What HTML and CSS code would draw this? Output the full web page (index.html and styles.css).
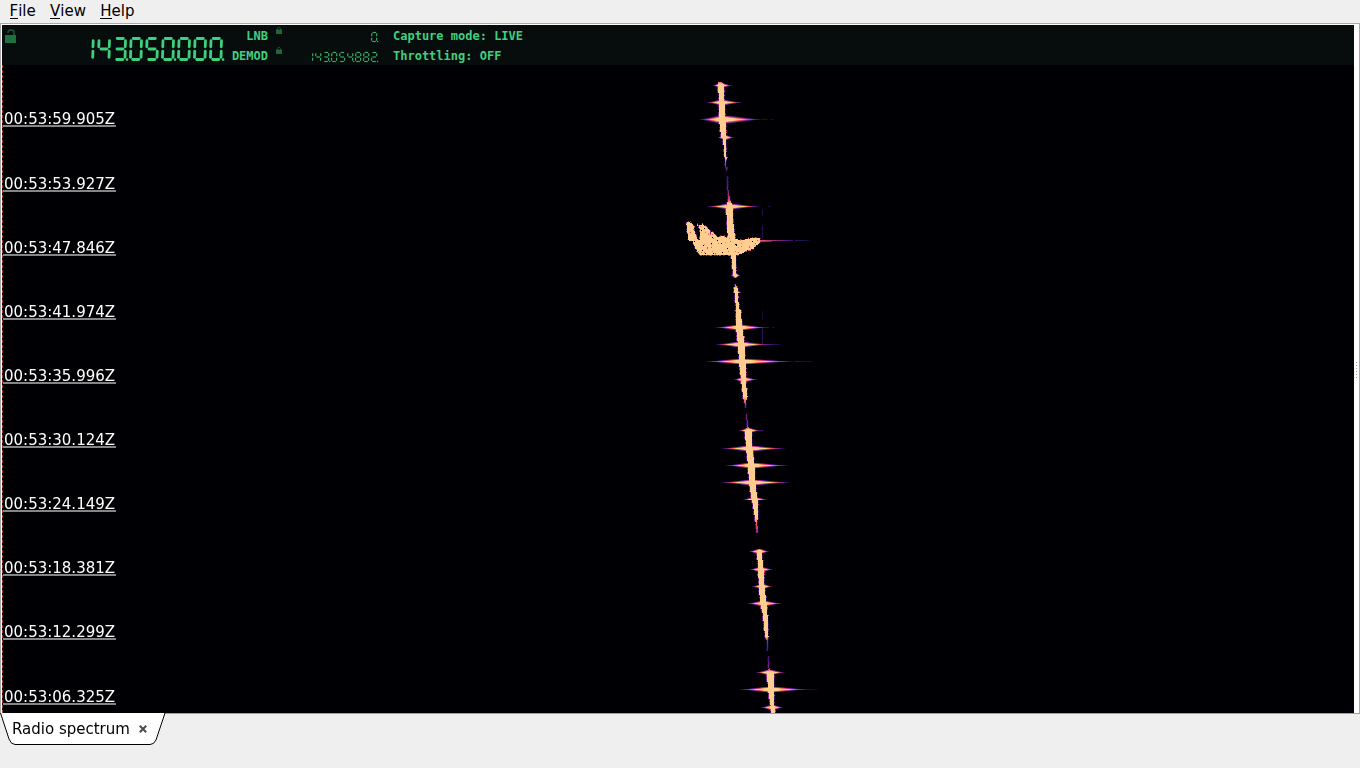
FILE: index.html
```html
<!DOCTYPE html>
<html lang="en">
<head>
<meta charset="utf-8">
<title>Radio spectrum</title>
<link rel="stylesheet" href="styles.css">
</head>
<body>
<nav class="menubar"><span><u>F</u>ile</span><span><u>V</u>iew</span><span><u>H</u>elp</span></nav>
<main class="frame">
  <section class="view">
    <header class="status">
      <svg class="lock-open" viewBox="0 0 12 14"><path d="M3 4V3q0-2 3-2t3 2v4" fill="none" stroke="#1c6138" stroke-width="1.4"/><path d="M0 6h11v8H0z" fill="#206f40"/></svg>
      <svg class="lcd lcd-main" data-value="143.050.000." role="img" aria-label="143.050.000"></svg>
      <div class="labels"><span>LNB</span><span>DEMOD</span></div>
      <div class="locks">
        <svg viewBox="0 0 6 7"><path d="M1.5 3V1.5q0-1 1.5-1t1.5 1V3" fill="none" stroke="#1a4c30"/><path d="M0 2.5h6V7H0z" fill="#20653c"/></svg>
        <svg viewBox="0 0 6 7"><path d="M1.5 3V1.5q0-1 1.5-1t1.5 1V3" fill="none" stroke="#1a4c30"/><path d="M0 2.5h6V7H0z" fill="#20653c"/></svg>
      </div>
      <div class="readouts">
        <svg class="lcd lcd-small" data-value="0." role="img" aria-label="0"></svg>
        <svg class="lcd lcd-small" data-value="143.054.882." role="img" aria-label="143.054.882"></svg>
      </div>
      <div class="modes"><span>Capture mode: LIVE</span><span>Throttling: OFF</span></div>
    </header>
    <div class="waterfall">
      <canvas class="plot" width="1352" height="648"></canvas>
      <ol class="times">
        <li>00:53:59.905Z</li><li>00:53:53.927Z</li><li>00:53:47.846Z</li><li>00:53:41.974Z</li><li>00:53:35.996Z</li><li>00:53:30.124Z</li><li>00:53:24.149Z</li><li>00:53:18.381Z</li><li>00:53:12.299Z</li><li>00:53:06.325Z</li>
      </ol>
    </div>
  </section>
  <div class="splitter"><i></i><i></i><i></i><i></i><i></i><i></i></div>
</main>
<footer class="tabs">
  <div class="tab">
    <svg class="tab-shape" viewBox="0 0 166 32"><path d="M.5 0L9 26Q11 31.5 15 31.500H150Q154 31.500 156 27L165 0" fill="#fff" stroke="#000"/></svg>
    <span class="tab-name">Radio spectrum</span>
    <svg class="close" viewBox="0 0 8 8"><path d="M.8.8l6.400 6.400M7.200.8L.8 7.200" stroke="#4b4b4b" stroke-width="2"/></svg>
  </div>
</footer>
<script src="app.js"></script>
</body>
</html>
```
FILE: styles.css
```css
* { box-sizing: border-box; }
body { margin: 0; width: 1360px; height: 768px; overflow: hidden; display: flex; flex-direction: column; background: #efefef; color: #000; font-family: "DejaVu Sans", sans-serif; font-size: 15px; }
svg { display: block; }
.menubar { height: 23px; padding: 2px 0 0 9.5px; display: flex; gap: 14.3px; line-height: 18px; }
.menubar u { text-decoration: none; box-shadow: inset 0 -1px #000; display: inline-block; height: 17px; }
.frame { height: 691px; display: flex; background: #fff; border-top: 1px solid #a8a8a8; border-left: 1px solid #a8a8a8; border-right: 1px solid #a8a8a8; border-bottom: 1px solid #a0a0a0; padding: 1px 0 0 1px; }
.view { width: 1352px; height: 688px; background: #000004; }
.status { height: 40px; background: #070d0d; display: flex; color: #3fd07e; font: bold 12px/20px "DejaVu Sans Mono", monospace; }
.lock-open { width: 12px; height: 14px; margin: 4px 0 0 3px; }
.lcd-main { width: 140px; height: 40px; margin-left: 69px; color: #3fd07e; }
.labels { width: 42px; padding-top: 1px; display: flex; flex-direction: column; text-align: right; }
.locks { width: 6px; margin: 2px 0 0 8px; display: flex; flex-direction: column; gap: 13px; }
.locks svg { width: 6px; height: 7px; }
.readouts { width: 72px; margin-left: 26px; display: flex; flex-direction: column; align-items: flex-end; color: #35ad69; }
.lcd-small { width: 72px; height: 20px; }
.modes { margin-left: 13px; padding-top: 1px; display: flex; flex-direction: column; white-space: pre; }
.waterfall { display: grid; height: 648px; }
.waterfall > * { grid-area: 1 / 1; }
.plot { display: block; width: 1352px; height: 648px; }
.times { list-style: none; margin: 0; padding: 43px 0 0 1px; display: grid; grid-template-rows: 65px repeat(7, 64px) 65px 19px; align-content: start; justify-content: start; color: #fff; }
.times li { width: 113px; height: 19px; padding-left: 1px; line-height: 22px; border-bottom: 2px solid #858585; }
.splitter { width: 4px; display: flex; flex-direction: column; align-items: center; gap: 2px; padding-top: 337px; }
.splitter i { width: 1px; height: 1px; background: #999; flex: none; }
.tabs { height: 54px; margin-top: -1px; }
.tab { width: 166px; height: 32px; display: grid; grid-template-columns: 138px 28px; align-items: center; }
.tab-shape { grid-area: 1 / 1 / 2 / 3; width: 166px; height: 32px; }
.tab-name { grid-area: 1 / 1; padding-left: 12px; white-space: nowrap; z-index: 1; }
.close { grid-area: 1 / 2; width: 8px; height: 8px; z-index: 1; margin-left: 1px; }
```
FILE: app.js
```js
// Lit segments of each digit: top, upper right, lower right, bottom, lower left, upper left, middle
const SEG = { 0: 'abcdef', 1: 'bc', 2: 'abged', 3: 'abgcd', 4: 'fgbc', 5: 'afgcd', 8: 'abcdefg' };
function lcd(svg, o) {
  const digits = (svg.dataset.value.match(/\d/g) || []).length;
  let out = '', x = o.right - (digits - 1) * o.pitch - o.w;
  const t = o.top, m = t + o.h / 2, b = t + o.h, g = o.gap, k = o.skew;
  for (const c of svg.dataset.value) {
    if (c === '.') {
      out += `<rect x="${x - o.pitch + o.w + o.dotx}" y="${b - o.dot / 2}" width="${o.dot}" height="${o.dot}" fill="currentColor"/>`;
      continue;
    }
    const r = x + o.w, s0 = c === '1' ? o.one : 0;
    const lines = {
      a: [x + g + k, t, r - g + k, t], b: [r + k - s0, t + g, r + k / 2 - s0, m - g], c: [r + k / 2 - s0, m + g, r - s0, b - g],
      d: [x + g, b, r - g, b], e: [x, b - g, x + k / 2, m + g], f: [x + k / 2, m - g, x + k, t + g], g: [x + g + k / 2, m, r - g + k / 2, m]
    };
    for (const s of SEG[c]) {
      const p = lines[s];
      out += `<path d="M${p[0]} ${p[1]}L${p[2]} ${p[3]}" stroke="currentColor" stroke-width="${o.sw}" stroke-linecap="${o.cap}"/>`;
    }
    x += o.pitch;
  }
  svg.innerHTML = out;
}
lcd(document.querySelector('.lcd-main'), { pitch: 16, right: 135, w: 10.5, top: 13.5, h: 21, gap: 2.2, skew: 0.5, sw: 2.8, dot: 2.4, dotx: 0.8, one: 0.3, cap: 'round' });
const smallOptions = { pitch: 8, right: 68.5, w: 5, top: 7.5, h: 9, gap: 0.7, skew: 0.3, sw: 1.2, dot: 1.2, dotx: 0.5, one: 0, cap: 'butt' };
for (const s of document.querySelectorAll('.lcd-small')) lcd(s, smallOptions);

const W = 1352, H = 648, OX = 2, OY = 65;
const ctx = document.querySelector('.plot').getContext('2d');
const level = new Float32Array(W * H);
let seed = 7;
const rnd = () => (seed = (seed * 16807) % 2147483647) / 2147483647;
function put(x, y, v) {
  x = Math.round(x) - OX; y = Math.round(y) - OY;
  if (x >= 0 && y >= 0 && x < W && y < H && v > level[y * W + x]) level[y * W + x] = Math.min(1, v);
}
// Carrier drift: [y, left edge, right edge, level]
const runs = [
  [[82,718,722,.8],[84,718,723,1],[102,719,724,1],[119,719,725,1],[136,721,726,1],[138,723,725,1],[157,724.5,726,1],[163,725,726,.55],[171,726,727,.2]],
  [[176,726.5,727.5,.22],[190,727.5,728.5,.35],[199,728,730,.6],[203,727,731,1],[206,726,732,1],[224,727,733,1],[241,728,735,1],[254,731,735,1],[274,733,736,1],[278,734,735,.3]],
  [[284,735,736,.7],[288,734,737,1],[308,736,738.5,1],[310,736,740,1],[327,736,742,1],[345,738,744,1],[362,739,745,1],[379,741,745,1],[396,743,747,1],[403,744.5,746,.6],[408,745,746,.2]],
  [[414,746,747,.35],[425,747,748,.4],[429,746,749,.9],[431,745,751,1],[448,746,752,1],[465,748,754,1],[483,749,755,1],[500,752,757,1],[517,755,757,1],[526,756,757.5,.6],[533,756.5,757.5,.4]],
  [[550,757,761,1],[569,758,763,1],[586,759,764,1],[603,760,766,1],[615,763,767,1],[636,765,768,1],[641,767,768,.4],[651,767.5,768.5,.25]],
  [[656,768,769,.25],[668,768.5,769.5,.4],[671,768,771,.9],[673,767,773,1],[690,768,773,1],[707,771,774,1],[713,771,775,1]]
];
for (const run of runs) for (let i = 1; i < run.length; i++) {
  const a = run[i - 1], b = run[i];
  for (let y = a[0]; y < b[0]; y++) {
    const f = (y - a[0]) / (b[0] - a[0]), q = n => a[n] + (b[n] - a[n]) * f;
    const v = q(3), l = Math.round(q(1)), r = Math.round(q(2) + (v > .9 ? .5 : 0));
    for (let x = l; x < r; x++) put(x, y, v);
    put(l - 1, y, v * rnd() * .5);
    put(r, y, v * (rnd() > .65 ? .65 : .25) * rnd());
  }
}
// Bursts: [y, centre, left end, right end, height of the bright core]
const bursts = [
  [85,720,712,732,3],[102,721,706,742,3],[119,722,698,763,5],[137,724,717,734,3],[206,729,706,760,3],[275,735,730,740,3],[292,736,732,741,1],[310,738,733,742,1],
  [327,739,714,768,3],[344,740,714,770,3],[361,742,704,795,4],[379,743,733,757,3],[430,748,738,760,3],[448,749,720,786,4],[465,751,724,789,3],[482,752,719,791,4],[499,754,742,767,2],
  [551,759,748,769,3],[569,760,749,773,3],[586,762,751,772,3],[603,763,746,782,3],[672,769,755,785,4],[689,770,738,810,4],[707,772,760,783,3]
];
for (const [y, c, l, r, h] of bursts) for (let x = l; x <= r; x++) {
  const d = x < c ? (c - x) / (c - l) : (x - c) / (r - c);
  const v = 1.85 * (1 - d) ** 1.1;
  put(x, y, v);
  for (let k = 1; k <= Math.ceil(h / 2); k++) {
    const side = v - k * (h === 5 ? .35 : .5);
    put(x, y - k, side);
    if (h > 2) put(x, y + k, side);
  }
}
const hline = (y, a, b, v0, v1) => { for (let x = a; x <= b; x++) put(x, y, v0 + (v1 - v0) * (x - a) / (b - a)); };
hline(240, 758, 792, .7, .2); hline(241, 756, 771, .65, .3); hline(240, 795, 808, .2, .1);
hline(119, 763, 767, .16, .08); hline(119, 771, 773, .13, .08); hline(206, 768, 769, .15, .1);
hline(361, 795, 812, .2, .08); hline(689, 805, 816, .15, .08); hline(327, 764, 768, .24, .14); hline(327, 772, 774, .14, .08);
hline(344, 762, 779, .4, .1); hline(430, 756, 761, .25, .2); hline(482, 762, 763, .7, .4); hline(448, 762, 763, .7, .4);
for (const [a, b, v] of [[209,216,.13],[225,238,.15],[311,320,.09],[328,345,.18],[430,431,.3],[480,485,.25]]) for (let y = a; y < b; y++) put(762, y, v);

// Meteor echo: filled outline with a ragged rim and dim specks
const echo = [[37,36],[48,36],[54,43],[58,60],[63,78],[72,93],[76,88],[74,65],[73,45],[84,43],[93,50],[100,55],[105,64],[107,78],[110,64],[119,74],[130,82],[145,78],[157,84],[200,90],[235,84],[255,85],[254,100],[242,107],[235,117],[215,122],[200,132],[180,136],[79,136],[68,127],[60,113],[53,94],[41,92],[36,60]].map(([x, y]) => [675 + x / 3, 210 + y / 3]);
const inside = (x, y) => {
  let hit = false;
  for (let i = 0, j = echo.length - 1; i < echo.length; j = i++) {
    const [xi, yi] = echo[i], [xj, yj] = echo[j];
    if ((yi > y) !== (yj > y) && x < (xj - xi) * (y - yi) / (yj - yi) + xi) hit = !hit;
  }
  return hit;
};
for (let y = 220; y < 258; y++) for (let x = 684; x < 762; x++) {
  const near = inside(x - .5, y + .5) || inside(x + 1.5, y + .5) || inside(x + .5, y - .5) || inside(x + .5, y + 1.5);
  if (inside(x + .5, y + .5)) {
    const i = (y - OY) * W + x - OX, s = rnd();
    level[i] = s < .008 && x < 728 ? 0 : s < .035 ? .6 + rnd() * .25 : 1;
  } else if (near) put(x, y, rnd() > .35 ? rnd() * .75 : 0);
}
for (const [x, y] of [[686,222],[697,223],[712,231],[720,235],[724,235],[727,235],[748,237],[752,237],[756,237]]) { put(x, y, .35); put(x, y + 1, .8); put(x, y + 2, 1); }
for (const [x, y] of [[735,244],[736,244],[736,245],[752,241],[711,243],[704,228],[701,230],[722,252]]) level[(y - OY) * W + x - OX] = 0;

const map = [[0,[0,0,4]],[.15,[34,16,78]],[.3,[88,25,126]],[.45,[148,44,128]],[.6,[211,67,109]],[.75,[244,105,92]],[.88,[253,160,109]],[1,[254,205,143]]];
const image = ctx.createImageData(W, H);
for (let i = 0; i < level.length; i++) {
  const v = Math.max(0, level[i]);
  let n = 1; while (n < map.length - 1 && map[n][0] < v) n++;
  const [p, a] = map[n - 1], [q, b] = map[n], f = (v - p) / (q - p);
  for (let c = 0; c < 3; c++) image.data[i * 4 + c] = a[c] + (b[c] - a[c]) * f;
  image.data[i * 4 + 3] = 255;
}
ctx.putImageData(image, 0, 0);
// Dashed marker at the left edge
ctx.fillStyle = '#a83a3a';
for (let y = 0; y < H; y += 5) ctx.fillRect(0, y, 1, 3);
```
